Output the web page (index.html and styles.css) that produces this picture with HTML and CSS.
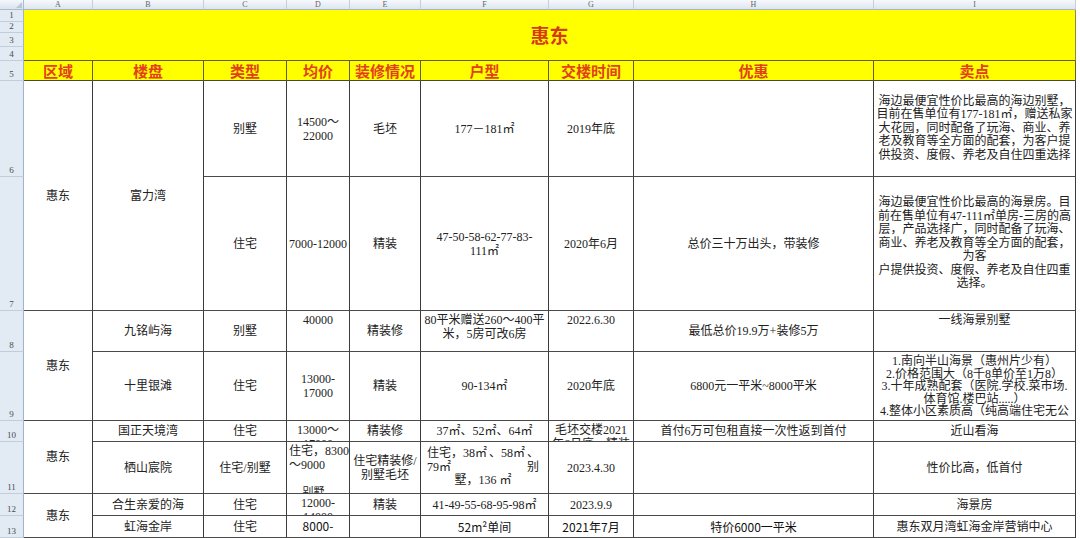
FILE: index.html
```html
<!DOCTYPE html>
<html lang="zh-CN">
<head>
<meta charset="utf-8">
<title>惠东</title>
<link rel="stylesheet" href="styles.css">
</head>
<body>
<div class="sheet">
  <div class="corner"></div>
  <div class="ch">A</div><div class="ch">B</div><div class="ch">C</div><div class="ch">D</div><div class="ch">E</div><div class="ch">F</div><div class="ch">G</div><div class="ch">H</div><div class="ch">I</div>

  <div class="rh">1</div>
  <div class="title">惠东</div>
  <div class="rh">2</div>
  <div class="rh">3</div>
  <div class="rh">4</div>

  <div class="rh">5</div>
  <div class="hd">区域</div><div class="hd">楼盘</div><div class="hd">类型</div><div class="hd">均价</div><div class="hd">装修情况</div><div class="hd">户型</div><div class="hd">交楼时间</div><div class="hd">优惠</div><div class="hd">卖点</div>

  <div class="rh">6</div>
  <div class="c rs2">惠东</div>
  <div class="c rs2">富力湾</div>
  <div class="c">别墅</div>
  <div class="c"><div>14500～<br>22000</div></div>
  <div class="c">毛坯</div>
  <div class="c">177－181㎡</div>
  <div class="c">2019年底</div>
  <div class="c"></div>
  <div class="c sell"><div>海边最便宜性价比最高的海边别墅，<br>目前在售单位有177-181㎡，赠送私家<br>大花园，同时配备了玩海、商业、养<br>老及教育等全方面的配套，为客户提<br>供投资、度假、养老及自住四重选择</div></div>

  <div class="rh">7</div>
  <div class="c">住宅</div>
  <div class="c">7000-12000</div>
  <div class="c">精装</div>
  <div class="c"><div>47-50-58-62-77-83-<br>111㎡</div></div>
  <div class="c">2020年6月</div>
  <div class="c">总价三十万出头，带装修</div>
  <div class="c sell"><div>海边最便宜性价比最高的海景房。目<br>前在售单位有47-111㎡单房-三房的高<br>层，产品选择广，同时配备了玩海、<br>商业、养老及教育等全方面的配套，<br>为客<br>户提供投资、度假、养老及自住四重<br>选择。</div></div>

  <div class="rh">8</div>
  <div class="c rs2">惠东</div>
  <div class="c">九铭屿海</div>
  <div class="c">别墅</div>
  <div class="c top">40000</div>
  <div class="c">精装修</div>
  <div class="c top"><div>80平米赠送260～400平<br>米，5房可改6房</div></div>
  <div class="c top">2022.6.30</div>
  <div class="c">最低总价19.9万+装修5万</div>
  <div class="c top">一线海景别墅</div>

  <div class="rh">9</div>
  <div class="c">十里银滩</div>
  <div class="c">住宅</div>
  <div class="c"><div>13000-<br>17000</div></div>
  <div class="c">精装</div>
  <div class="c">90-134㎡</div>
  <div class="c">2020年底</div>
  <div class="c">6800元一平米~8000平米</div>
  <div class="c top tight"><div>1.南向半山海景（惠州片少有）<br>2.价格范围大（8千8单价至1万8）<br>3.十年成熟配套（医院.学校.菜市场.<br>体育馆.楼巴站.....）<br>4.整体小区素质高（纯高端住宅无公</div></div>

  <div class="rh">10</div>
  <div class="c rs2">惠东</div>
  <div class="c">国正天境湾</div>
  <div class="c">住宅</div>
  <div class="c top"><div>13000～<br>17000</div></div>
  <div class="c">精装修</div>
  <div class="c">37㎡、52㎡、64㎡</div>
  <div class="c top"><div>毛坯交楼2021<br>年6月底，精装</div></div>
  <div class="c">首付6万可包租直接一次性返到首付</div>
  <div class="c">近山看海</div>

  <div class="rh">11</div>
  <div class="c">栖山宸院</div>
  <div class="c">住宅/别墅</div>
  <div class="c top left"><div>住宅，8300<br>～9000<br><br><span class="sub">别墅，</span></div></div>
  <div class="c"><div>住宅精装修/<br>别墅毛坯</div></div>
  <div class="c"><div class="just">
    <div class="jl"><span>住宅，38㎡</span><span>、58㎡</span><span>、</span></div>
    <div class="jl"><span>79㎡</span><span>别</span></div>
    <div class="jc">墅，136 ㎡</div>
  </div></div>
  <div class="c">2023.4.30</div>
  <div class="c"></div>
  <div class="c">性价比高，低首付</div>

  <div class="rh">12</div>
  <div class="c rs2">惠东</div>
  <div class="c">合生亲爱的海</div>
  <div class="c">住宅</div>
  <div class="c top"><div>12000-<br>14000</div></div>
  <div class="c">精装</div>
  <div class="c">41-49-55-68-95-98㎡</div>
  <div class="c">2023.9.9</div>
  <div class="c"></div>
  <div class="c">海景房</div>

  <div class="rh">13</div>
  <div class="c">虹海金岸</div>
  <div class="c">住宅</div>
  <div class="c top sans">8000-</div>
  <div class="c"></div>
  <div class="c sans">52m²单间</div>
  <div class="c sans">2021年7月</div>
  <div class="c sans">特价6000一平米</div>
  <div class="c">惠东双月湾虹海金岸营销中心</div>
</div>
</body>
</html>
```

FILE: styles.css
```css
html, body {
  margin: 0;
  padding: 0;
}

body {
  width: 1080px;
  height: 538px;
  overflow: hidden;
  background: #ffffff;
  font-family: "Liberation Serif", "Noto Sans CJK SC", serif;
}

.sheet {
  display: grid;
  width: 1076px;
  grid-template-columns: 24px 69px 111px 83px 63px 71px 128px 85px 240px 202px;
  grid-template-rows: 10px 12px 11px 14px 14px 20px 96px 134px 41px 69px 21px 52px 22px 22px;
}

.sheet > div {
  box-sizing: border-box;
  min-width: 0;
  min-height: 0;
}

.corner {
  position: relative;
  background: linear-gradient(#f4f7fb, #dbe3ed);
  border-right: 1px solid #a9bbd0;
  border-bottom: 1px solid #a9bbd0;
}

.corner::after {
  content: "";
  position: absolute;
  right: 1px;
  bottom: 1px;
  width: 0;
  height: 0;
  border-left: 6px solid transparent;
  border-bottom: 6px solid #b9c6d6;
}

.ch {
  background: linear-gradient(#f6f8fc, #dfe6ef);
  border-right: 1px solid #c3cfdd;
  border-bottom: 1px solid #a3b7ce;
  color: #666;
  font-size: 8px;
  line-height: 9px;
  text-align: center;
}

.rh {
  background: #e2eaf4;
  border-right: 1px solid #9fb3cb;
  border-bottom: 1px solid #bfcddd;
  color: #4a4a4a;
  font-size: 9px;
  line-height: 10px;
  display: flex;
  align-items: flex-end;
  justify-content: center;
  padding-bottom: 1px;
  overflow: hidden;
}

.title {
  grid-column: span 9;
  grid-row: span 4;
  background: #ffff00;
  border-bottom: 1px solid #5e5e2a;
  border-right: 1px solid #8a8a40;
  color: #d83a10;
  font-family: "Noto Sans CJK SC", sans-serif;
  font-weight: 700;
  font-size: 19px;
  line-height: 22px;
  display: flex;
  align-items: center;
  justify-content: center;
}

.hd {
  background: #ffff00;
  border-right: 1px solid #5e5e2a;
  border-bottom: 1px solid #4a4a30;
  color: #e2401a;
  font-family: "Noto Sans CJK SC", sans-serif;
  font-weight: 700;
  font-size: 15px;
  line-height: 18px;
  display: flex;
  align-items: center;
  justify-content: center;
  white-space: nowrap;
  overflow: hidden;
}

.c {
  border-right: 1px solid #3c3c3c;
  border-bottom: 1px solid #4a4a4a;
  color: #222;
  font-size: 12px;
  line-height: 14px;
  display: flex;
  align-items: center;
  justify-content: center;
  text-align: center;
  white-space: nowrap;
  overflow: hidden;
}

.rs2 {
  grid-row: span 2;
}

.top {
  align-items: flex-start;
  padding-top: 2px;
}

.left {
  justify-content: flex-start;
  text-align: left;
  padding-left: 2px;
}

.sell {
  line-height: 13.6px;
}

.tight {
  line-height: 12.5px;
  padding-top: 3px;
}

.sub {
  display: block;
  font-size: 11px;
  text-align: center;
  margin-top: -1px;
}

.just {
  width: 100%;
  padding: 0 9px 0 6px;
  box-sizing: border-box;
  line-height: 13.5px;
}

.jl {
  display: flex;
  justify-content: space-between;
}

.jc {
  text-align: center;
}

.sans {
  font-family: "Noto Sans CJK SC", sans-serif;
  color: #111;
  font-size: 12px;
  line-height: 16px;
}
```
